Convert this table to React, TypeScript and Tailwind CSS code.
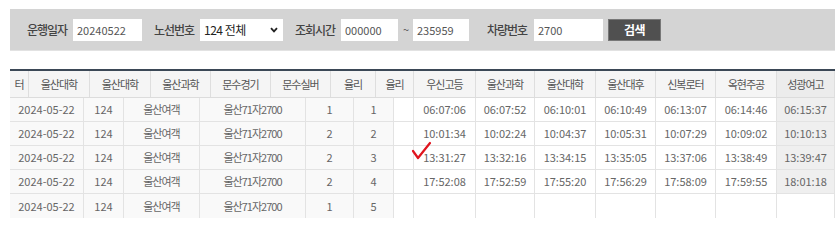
import React from "react";

const FONT = { fontFamily: '"Noto Sans CJK KR", "Noto Sans", sans-serif' };

const headers = ["터", "울산대학", "울산대학", "울산과학", "문수경기", "문수실버", "율리", "율리", "우신고등", "울산과학", "울산대학", "울산대후", "신복로터", "옥현주공", "성광여고"];
const headerW = ["w-[19px]", "w-[61px]", "w-[61px]", "w-[60px]", "w-[60px]", "w-[60px]", "w-[45px]", "w-[38px]", "w-[62px]", "w-[59px]", "w-[61px]", "w-[60px]", "w-[60px]", "w-[61px]", "w-[58px]"];

const leftW = ["w-[74px]", "w-[40px]", "w-[76px]", "w-[106px]", "w-[48px]", "w-[40px]"];
const timeW = ["w-[62px]", "w-[59px]", "w-[61px]", "w-[60px]", "w-[60px]", "w-[61px]", "w-[58px]"];

const rows: { left: string[]; times: string[] }[] = [
  { left: ["2024-05-22", "124", "울산여객", "울산71자2700", "1", "1"], times: ["06:07:06", "06:07:52", "06:10:01", "06:10:49", "06:13:07", "06:14:46", "06:15:37"] },
  { left: ["2024-05-22", "124", "울산여객", "울산71자2700", "2", "2"], times: ["10:01:34", "10:02:24", "10:04:37", "10:05:31", "10:07:29", "10:09:02", "10:10:13"] },
  { left: ["2024-05-22", "124", "울산여객", "울산71자2700", "2", "3"], times: ["13:31:27", "13:32:16", "13:34:15", "13:35:05", "13:37:06", "13:38:49", "13:39:47"] },
  { left: ["2024-05-22", "124", "울산여객", "울산71자2700", "2", "4"], times: ["17:52:08", "17:52:59", "17:55:20", "17:56:29", "17:58:09", "17:59:55", "18:01:18"] },
  { left: ["2024-05-22", "124", "울산여객", "울산71자2700", "1", "5"], times: ["", "", "", "", "", "", ""] },
];

const isKo = (s: string) => /[가-힣]/.test(s);

function Label({ text, w }: { text: string; w: string }) {
  return (
    <span className={`${w} whitespace-nowrap text-[12px] font-medium tracking-[-1px] text-[#444]`}>{text}</span>
  );
}

function Field({ value, w, ml }: { value: string; w: string; ml: string }) {
  return (
    <input
      readOnly
      value={value}
      className={`${ml} ${w} h-[22px] bg-white pl-[4px] text-[11px] text-[#555] outline-none`}
      style={FONT}
    />
  );
}

export default function App() {
  return (
    <div className="relative w-[835px] h-[240px] overflow-hidden bg-white" style={FONT}>
      {/* filter bar */}
      <div className="ml-[10px] mt-[9px] h-[42px] bg-[#d4d4d4] border-b border-[#e2e2e2] flex items-center">
        <span className="ml-[17px]" />
        <Label text="운행일자" w="w-[43px]" />
        <Field value="20240522" w="w-[69px]" ml="ml-[3px]" />
        <span className="ml-[12px]" />
        <Label text="노선번호" w="w-[43px]" />
        <div className="ml-[3px] w-[83px] h-[22px] bg-white flex items-center justify-between pl-[4px] pr-[5px]">
          <span className="text-[12px] text-[#222] tracking-[-0.5px]">124 전체</span>
          <svg width="8" height="6" viewBox="0 0 8 6">
            <path d="M1 1.2 L4 4.4 L7 1.2" fill="none" stroke="#222" strokeWidth="1.8" />
          </svg>
        </div>
        <span className="ml-[12px]" />
        <Label text="조회시간" w="w-[43px]" />
        <Field value="000000" w="w-[57px]" ml="ml-[3px]" />
        <span className="ml-[5px] w-[5px] text-[11px] text-[#555]">~</span>
        <Field value="235959" w="w-[56px]" ml="ml-[5px]" />
        <span className="ml-[18px]" />
        <Label text="차량번호" w="w-[44px]" />
        <Field value="2700" w="w-[69px]" ml="ml-[3px]" />
        <button className="ml-[5px] w-[53px] h-[22px] bg-[#505050] border border-[#777] text-white text-[12px] font-bold tracking-[-0.5px]">
          검색
        </button>
      </div>

      {/* table */}
      <div className="ml-[10px] mt-[18px] border-t-2 border-[#3b4856]">
        <div className="flex h-[27px] border-b border-[#dcdcdc]">
          {headers.map((h, i) => (
            <div
              key={i}
              className={`${headerW[i]} shrink-0 h-full flex items-center justify-center overflow-hidden whitespace-nowrap border-r border-[#dedede] text-[11px] tracking-[-1px] text-[#555] ${i === headers.length - 1 ? "bg-[#ececec]" : "bg-[#f5f5f5]"}`}
            >
              {h}
            </div>
          ))}
        </div>
        {rows.map((r, ri) => {
          const last = ri === rows.length - 1;
          return (
            <div key={ri} className={`flex h-[24px] ${last ? "" : "border-b border-[#e3e3e3]"}`}>
              {r.left.map((c, ci) => (
                <div
                  key={ci}
                  className={`${leftW[ci]} shrink-0 h-full flex items-center justify-center whitespace-nowrap bg-[#f9f9f9] border-r border-[#e3e3e3] text-[11px] text-[#666] ${isKo(c) ? "tracking-[-1px]" : ""}`}
                >
                  {c}
                </div>
              ))}
              <div className="w-[20px] shrink-0 h-full bg-white border-r border-[#e3e3e3]" />
              {r.times.map((t, ti) => (
                <div
                  key={ti}
                  className={`${timeW[ti]} shrink-0 h-full flex items-center justify-center whitespace-nowrap border-r border-[#e3e3e3] text-[11px] text-[#666] ${ti === 6 && !last ? "bg-[#efefef]" : "bg-white"}`}
                >
                  {t}
                </div>
              ))}
            </div>
          );
        })}
      </div>

      {/* red check overlay */}
      <svg className="absolute left-[410px] top-[140px]" width="24" height="22" viewBox="0 0 24 22">
        <path d="M3 11 L8 18 L20 3" fill="none" stroke="#e0141e" strokeWidth="2.2" strokeLinecap="round" strokeLinejoin="round" />
      </svg>
    </div>
  );
}
